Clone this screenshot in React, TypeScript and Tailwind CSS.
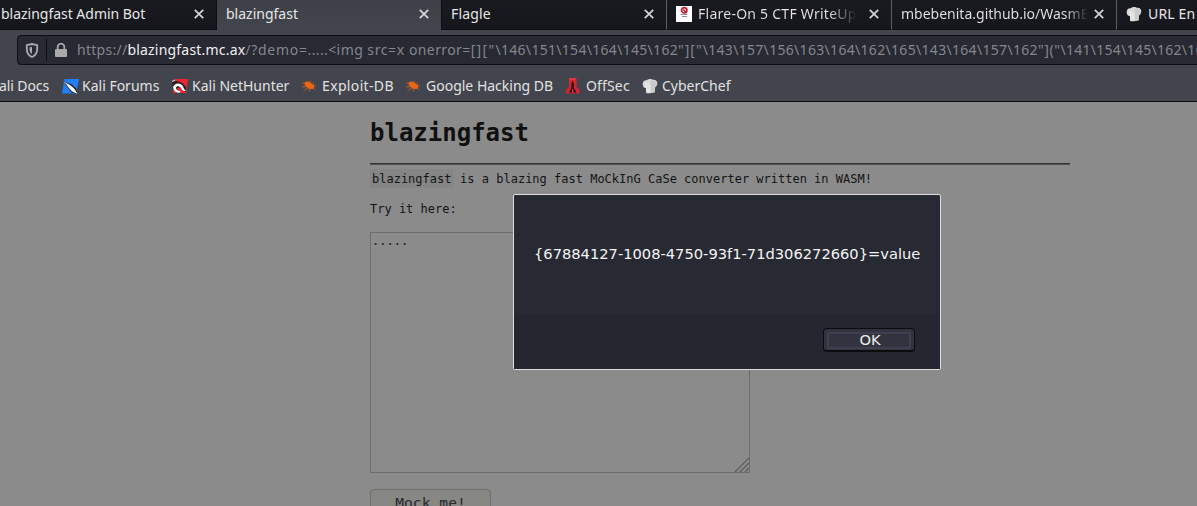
import type { ReactNode } from "react";

const ui = "font-['Noto_Sans',sans-serif] text-[14px] whitespace-pre";

function Close() {
  return (
    <svg width="10" height="10" viewBox="0 0 10 10" className="shrink-0" stroke="#d6d6d6" strokeWidth="1.7" fill="none">
      <path d="M.8.8l8.4 8.4M9.2.8L.8 9.2" />
    </svg>
  );
}

function Chef() {
  return (
    <svg width="16" height="16" viewBox="0 0 16 16" className="shrink-0">
      <path d="M4 15V10C1.500 10 .5 8 .7 5.500 1 3 3 1.800 4.800 2.300 5.500.8 9.500.3 10.800 1.800c2-.7 4.500.8 4.500 3.300 0 2.200-.8 3.900-2.300 4.400V14C10.500 15.200 6.500 15.500 4 15z" fill="#dcdcdc" />
      <path d="M9 15V7l-1-4 4-.5 3 3-2 4v5z" fill="#bcbcbc" opacity=".55" />
      <path d="M4.500 5v8M7 7v7.500" stroke="#f0f0f0" />
    </svg>
  );
}

function Bug() {
  return (
    <svg width="14" height="12" viewBox="0 0 14 12" className="shrink-0">
      <path d="M2.500 2.200C5 .5 8 1.800 10.500 4.300c1.800 1 2 3.200 1.200 4.200-2.700 1.500-5.700 0-7.200-1.500C3 6 2 4 2.500 2.200z" fill="#ee6614" />
      <path d="M0 3l4 1M0 7l5-.5M1.500 10.500l4.500-2.500M7 11.500l1-3M8 .5l1 3M11.500 2.500L11 5M12 6l2-.5M11 8l2 2" stroke="#b9602e" strokeWidth=".9" />
    </svg>
  );
}

function Forums() {
  return (
    <svg width="17" height="15" viewBox="0 0 17 15" className="shrink-0">
      <path d="M2.500 0H17l-2.800 14.500H0z" fill="#237ff5" />
      <path d="M.5.500L4 3.200l6 2.300 4.200 4 1.300 5.500-6-1.500-4-5z" fill="#20242c" />
      <path d="M.5 1.300l4 3 2.500 1.200 3 2 2.500 2.500L15.500 15 9.500 12 6.500 8.500 4.500 5.500z" fill="#fff" />
    </svg>
  );
}

function NetHunter() {
  return (
    <svg width="16" height="15" viewBox="0 0 16 15" className="shrink-0">
      <path d="M3 0h13l-2 14H1z" fill="#ed2535" />
      <path d="M0 3.500L4 1.800l6 2 4 4v5L10 11 8.500 8l-4 1.500 5 5-6-1.500L.8 9z" fill="#2b2024" />
      <path d="M1 8C3.500 3 9 3.800 11 7.500c1 2 1.500 3.500 3.500 4.500-3 .3-4.500-.5-5.500-3C7 6.500 4 7 4 9c0 1.800 2 2.800 4.500 3l-.5 1.700c-4 .3-6.500-1.700-7-5.700z" fill="#fff" />
      <path d="M0 2.500l3-1.500" stroke="#eee" />
    </svg>
  );
}

function OffSec() {
  return (
    <svg width="14" height="16" viewBox="0 0 14 16" className="shrink-0">
      <path d="M3 0h7.500v9l3 3v3.500H0V12l3-3z" fill="#d9232f" />
      <path d="M6.500 2.500L5.300 6v4L3 14.500h7.500L8 10V6z" fill="#30171c" />
      <path d="M3.500 1h6M6.700 11v4" stroke="#f04a50" />
    </svg>
  );
}

function Flare() {
  return (
    <svg width="16" height="16" viewBox="0 0 16 16" className="shrink-0">
      <path fill="#fff" d="M0 0h16v16H0z" />
      <circle cx="8.200" cy="4.300" r="2.700" fill="none" stroke="#c9182b" strokeWidth="1.700" />
      <path d="M7.300 3.500l3.300 3.500" stroke="#941323" strokeWidth="1.200" />
      <path d="M4.500 8.500h7M6 10.500h5" stroke="#8b8b8b" />
    </svg>
  );
}

function Tab({ width, pad, active, icon, sep, children }: { width: string; pad: string; active?: boolean; icon?: ReactNode; sep?: boolean; children: ReactNode }) {
  return (
    <div className={`flex h-[30px] shrink-0 items-start border-r pt-[5px] ${width} ${pad} ${sep ? "border-[#5b5d63]" : "border-[#0d0e12]"} ${active ? "bg-linear-to-b from-[#3e4047] to-[#42454d]" : "border-b border-b-[#0d0e12] bg-linear-to-b from-[#191a20] to-[#16171c]"}`}>
      {icon && <div className="mt-px mr-[6px]">{icon}</div>}
      <div className={`${ui} min-w-0 flex-1 overflow-hidden leading-[18px] text-[#e6e6e6]`}>{children}</div>
      <div className="mt-1 mr-[12px]"><Close /></div>
    </div>
  );
}

function Bookmark({ icon, width, wide, children }: { icon: ReactNode; width: string; wide?: boolean; children: ReactNode }) {
  return (
    <div className={`flex h-5 shrink-0 items-center ${width}`}>
      <div className={`flex shrink-0 items-center ${wide ? "w-[21px] pl-px" : "w-5"}`}>{icon}</div>
      <span className={`${ui} leading-5`}>{children}</span>
    </div>
  );
}

export default function App() {
  return (
    <div className="relative h-[506px] w-[1197px] overflow-hidden bg-[#8b8b8b]">
      <header className="flex h-[102px] flex-col overflow-hidden border-b border-[#0d0e12] bg-[#42454d] text-[#e2e2e2]">
        <nav className="flex h-[30px] shrink-0 overflow-hidden">
          <Tab width="w-[217px]" pad="pl-px"><span className="tracking-[-0.02px]">blazingfast Admin Bot</span></Tab>
          <Tab width="w-[225px]" pad="pl-[9px]" active>blazingfast</Tab>
          <Tab width="w-[225px]" pad="pl-[9px]" sep><span className="tracking-[0.15px]">Flagle</span></Tab>
          <Tab width="w-[225px]" pad="pl-[9px]" sep icon={<Flare />}>
            <span className="bg-linear-to-r from-[#e6e6e6] from-82% to-transparent bg-clip-text tracking-[0.25px] text-transparent">Flare-On 5 CTF WriteUp</span>
          </Tab>
          <Tab width="w-[225px]" pad="pl-[9px]" sep>
            <span className="bg-linear-to-r from-[#e6e6e6] from-88% to-transparent bg-clip-text text-transparent">mbebenita.github.io/WasmE</span>
          </Tab>
          <Tab width="w-[225px]" pad="pl-[9px]" icon={<Chef />}><span className="tracking-[0.15px]">URL En</span></Tab>
        </nav>

        <div className="mt-[5px] ml-[17px] flex h-[30px] w-[1220px] shrink-0 items-center rounded-[4px] border border-[#0d0e12] bg-[#272933]">
          <svg width="14" height="15" viewBox="0 0 14 15" className="ml-[7px] shrink-0">
            <path d="M7 1L1.800 2.200V6c0 4.200 2 6.700 5.200 8 3.200-1.300 5.200-3.800 5.200-8V2.200z" fill="none" stroke="#aaaaad" strokeWidth="1.800" />
            <path d="M7 3.800L4.500 4.400V6c0 2.300.8 4 2.500 5z" fill="#aaaaad" />
          </svg>
          <div className="ml-[7px] h-[22px] w-px shrink-0 bg-[#0d0e12]" />
          <svg width="12" height="14" viewBox="0 0 12 14" className="ml-2 shrink-0">
            <path d="M2.700 7V4a3.300 3.300 0 016.600 0v3" fill="none" stroke="#aaaaad" strokeWidth="1.800" />
            <rect y="6" width="12" height="8" rx="1" fill="#aaaaad" />
          </svg>
          <div className={`${ui} ml-[10px] flex shrink-0 leading-5 text-[#85868c]`}>
            <span className="tracking-[0.27px]">https://</span>
            <span className="tracking-[0.2px] text-[#f1f1f2]">blazingfast.mc.ax</span>
            <span className="tracking-[0.7px]">/?demo=</span>
            <span className="tracking-[0.35px]">.....</span>
            <span className="tracking-[0.45px]">{"<img "}</span>
            <span className="tracking-[0.6px]">{"src=x "}</span>
            <span className="tracking-[0.4px]">onerror=</span>
            <span className="tracking-[1.3px]">{'[]["'}</span>
            <span className="tracking-[0.3px]">{"\\146\\151\\154\\164\\145\\162"}</span>
            <span className="tracking-[1px]">{'"]["'}</span>
            <span className="tracking-[0.31px]">{"\\143\\157\\156\\163\\164\\162\\165\\143\\164\\157\\162"}</span>
            <span className="tracking-[0.6px]">{'"]("'}</span>
            <span className="tracking-[0.27px]">{"\\141\\154\\145\\162\\164"}</span>
          </div>
        </div>

        <div className="mt-[11px] flex shrink-0 items-center">
          <div className={`${ui} w-[61px] shrink-0 leading-5`}><span className="-ml-px tracking-[-0.1px]">ali Docs</span></div>
          <Bookmark width="w-[110px]" icon={<Forums />} wide>Kali Forums</Bookmark>
          <Bookmark width="w-[131px]" icon={<NetHunter />} wide>Kali NetHunter</Bookmark>
          <Bookmark width="w-[104px]" icon={<Bug />}><span className="tracking-[0.35px]">Exploit-DB</span></Bookmark>
          <Bookmark width="w-[160px]" icon={<Bug />}>Google Hacking DB</Bookmark>
          <Bookmark width="w-[76px]" icon={<OffSec />}><span className="tracking-[0.15px]">OffSec</span></Bookmark>
          <Bookmark width="w-[120px]" icon={<Chef />}>CyberChef</Bookmark>
        </div>
      </header>

      <main className="ml-[370px] w-[700px] font-['DejaVu_Sans_Mono',monospace] text-[12px] text-[#141414]">
        <h1 className="h-[61px] pt-[17px] text-[24px] leading-[28px] font-bold text-[#101010]">blazingfast</h1>
        <div className="h-[2px] border-t border-[#333] bg-[#505050]" />
        <p className="mt-[4px] flex h-[19px] items-center whitespace-pre">
          <code className="h-[19px] bg-[#858585] px-[2px] font-['DejaVu_Sans_Mono',monospace] leading-[20px]">blazingfast</code>
          <span className="-ml-[0.6px]"> is a blazing fast MoCkInG CaSe converter written in WASM!</span>
        </p>
        <p className="mt-[13px] leading-[16px]">Try it here:</p>
        <div className="mt-[15px] flex h-[241px] w-[380px] items-start justify-between border border-[#6f6d6b] pl-px">
          <span className="leading-[16px]">.....</span>
          <svg width="15" height="15" viewBox="0 0 15 15" className="self-end" stroke="#5c5c5c" strokeWidth="1.200" fill="none">
            <path d="M1 15L15 1M6 15l9-9M11 15l4-4" />
          </svg>
        </div>
        <div className="mt-4 flex h-[29px] w-[121px] justify-center rounded-[4px] border border-[#6e6e6c] bg-[#878784] pt-[4px] text-[14.67px] leading-[18px] text-[#252a2d]">Mock me!</div>
      </main>

      <section className="absolute top-[194px] left-[513px] flex h-[176px] w-[428px] flex-col rounded-[2px] border border-[#dedede] bg-[#272933] font-['DejaVu_Sans',sans-serif] text-[14.67px] text-[#f4f4f4]">
        <p className="h-[119px] pt-[50px] pl-[20px] leading-[18px] whitespace-nowrap">{"{67884127-1008-4750-93f1-71d306272660}=value"}</p>
        <footer className="flex flex-1 justify-end border-t border-[#252730] bg-[#252730] pt-[13px] pr-[25px]">
          <button className="flex h-6 w-[92px] items-start rounded-[4px] border border-b-2 border-[#0b0c10] bg-[#31343f] p-[3px]">
            <span className="h-[17px] w-full rounded-[2px] border-2 border-[#3e414d] pl-[2px] leading-[12px] text-[#ececec]">OK</span>
          </button>
        </footer>
      </section>
    </div>
  );
}
